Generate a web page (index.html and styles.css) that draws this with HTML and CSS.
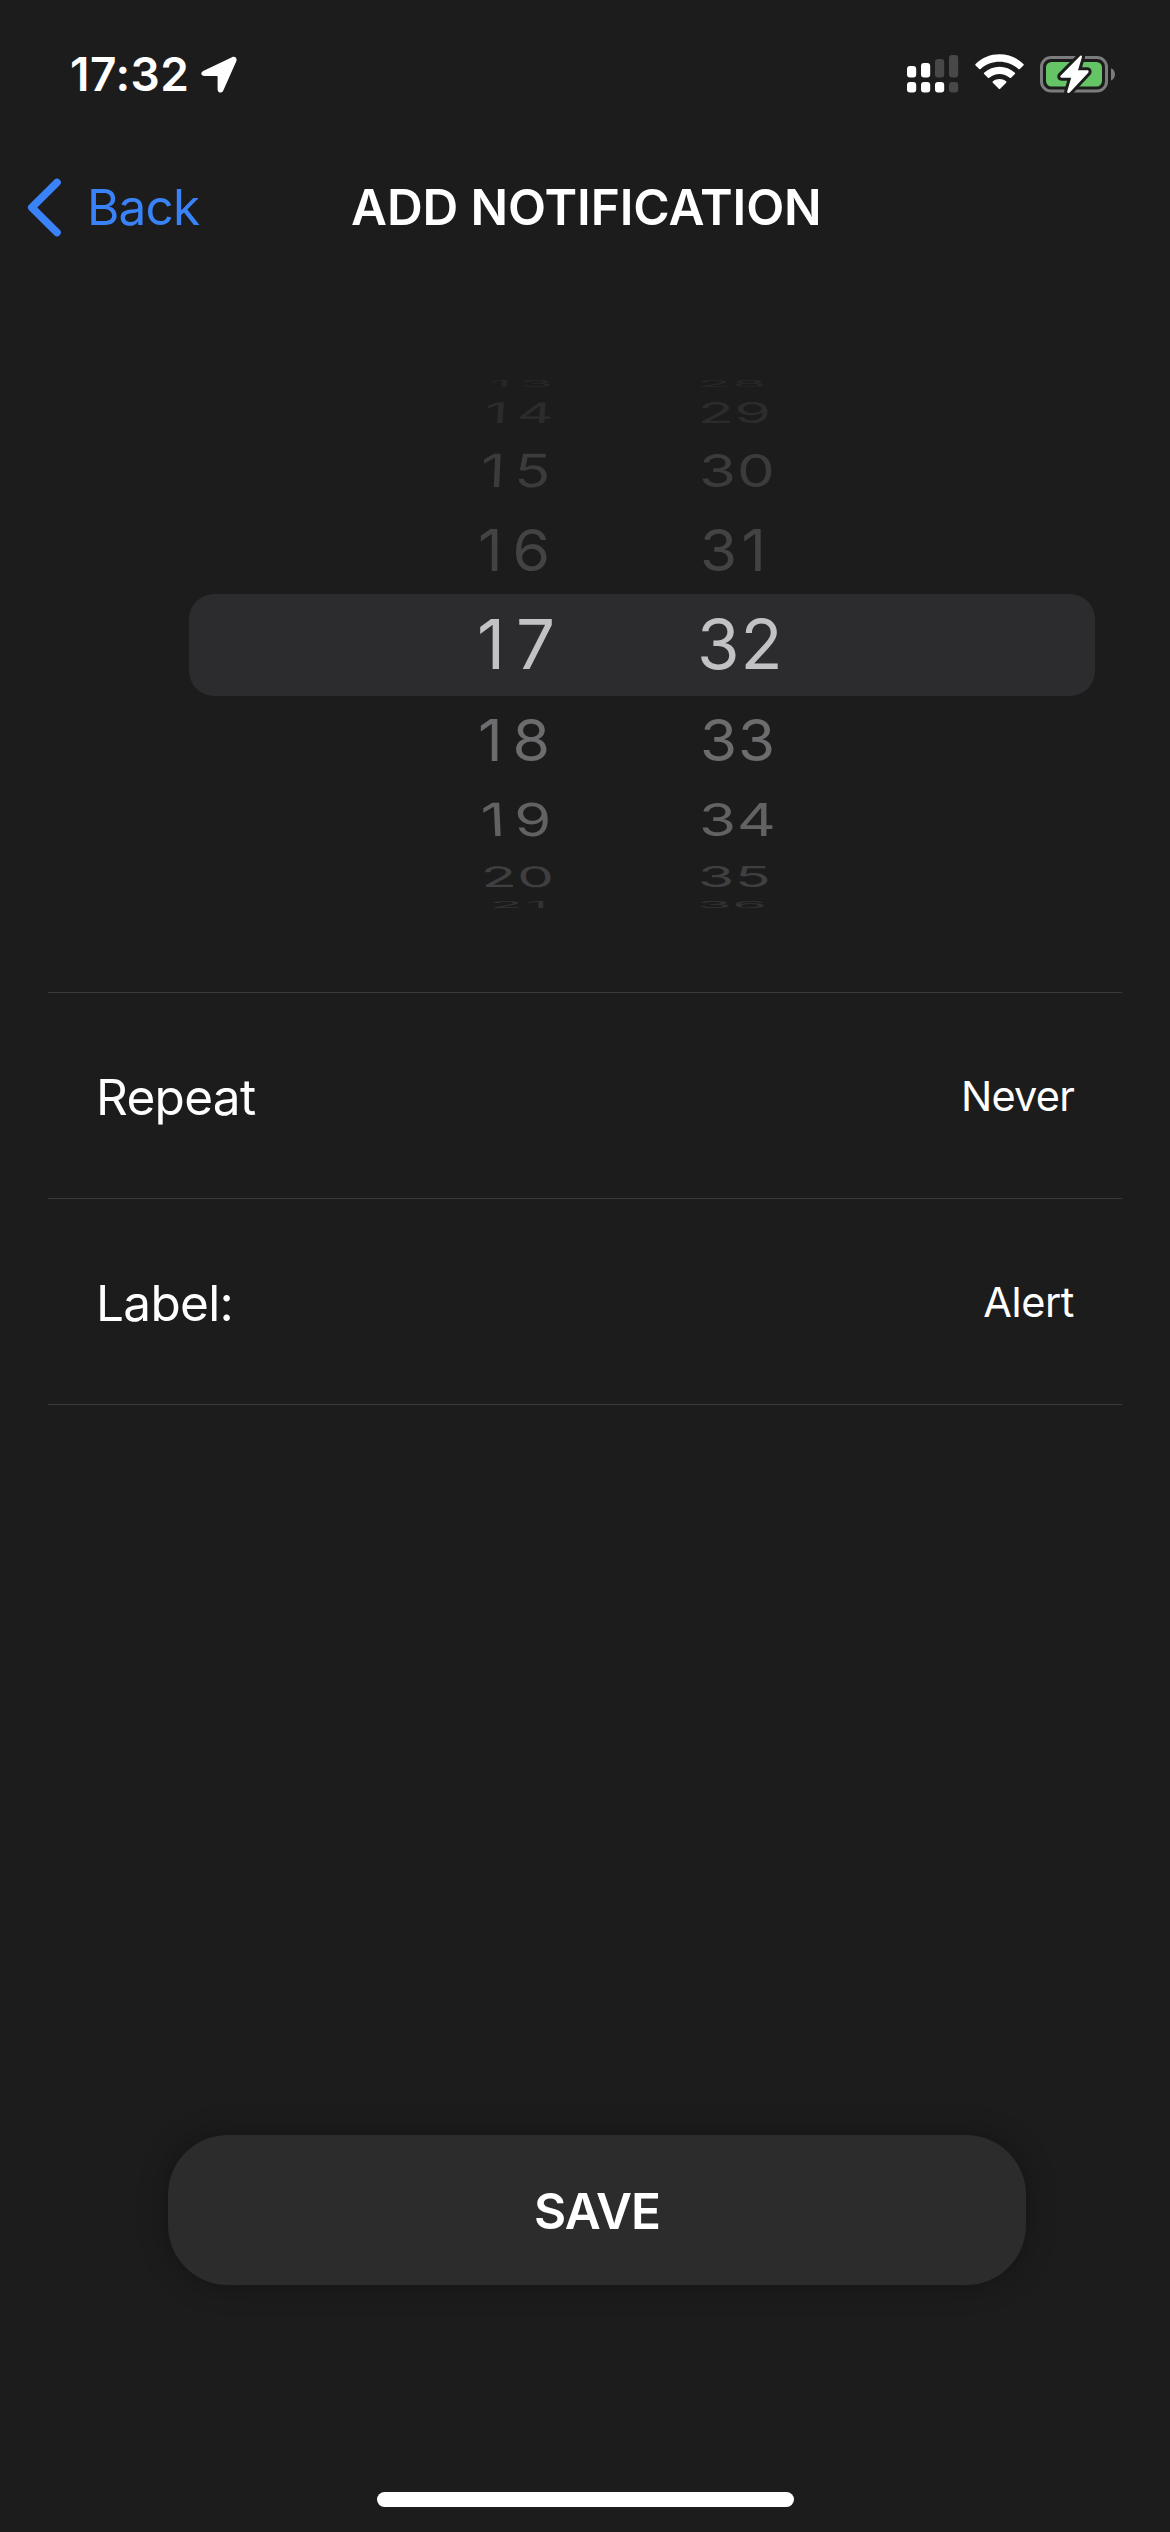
FILE: index.html
```html
<!DOCTYPE html>
<html lang="en">
<head>
<meta charset="utf-8">
<title>Add notification</title>
<link rel="stylesheet" href="styles.css">
</head>
<body>
<header class="status">
  <div class="status-left">
    <span class="time">17:32</span>
    <svg class="location" width="36" height="37" viewBox="0 0 36 37"><path d="M3.2 14.4 31 1.2c2.900-1.300 5.500 1.100 4.300 4.100L22.300 34.500c-1.400 3.200-5.600 2.600-5.700-1V20.800c0-.5-.2-.7-.7-.7H3.700c-4 0-4.900-4-.5-5.700z" fill="#fff"/></svg>
  </div>
  <div class="status-right">
    <svg width="52" height="38" viewBox="0 0 52 38">
      <g fill="#fff">
        <rect x="0" y="11" width="9.200" height="11.500" rx="3"/><rect x="14" y="8" width="9.200" height="14.500" rx="3"/>
        <rect x="0" y="27" width="9.200" height="10.500" rx="3"/><rect x="14" y="27" width="9.200" height="10.500" rx="3"/><rect x="28" y="27" width="9.200" height="10.500" rx="3"/>
      </g>
      <g fill="#48484a">
        <rect x="28" y="4" width="9.200" height="18.500" rx="3"/><rect x="42" y="0" width="9.200" height="22.500" rx="3"/><rect x="42" y="27" width="9.200" height="10.500" rx="3"/>
      </g>
    </svg>
    <svg class="wifi" width="49" height="37" viewBox="0 0 49 37" fill="#fff">
      <path d="M.6 10C13.500-3 35.500-3 48.400 10q.7.700 0 1.400l-3.600 3.600q-.7.700-1.400 0C33 5.300 16 5.300 5.600 15q-.7.700-1.400 0L.6 11.400Q-.1 10.700.6 10z"/>
      <path d="M9.100 18.700c8.500-8 22.300-8 30.800 0q.7.700 0 1.400l-3.800 3.700q-.7.600-1.400 0c-5.700-5.100-14.700-5.100-20.400 0q-.7.600-1.400 0l-3.800-3.700q-.7-.7 0-1.400z"/>
      <path d="M17.900 27.300c3.900-3 9.300-3 13.200 0q.8.700.1 1.400l-6 6.100q-.7.700-1.400 0l-6-6.100q-.7-.7.100-1.400z"/>
    </svg>
    <svg class="battery" width="76" height="39" viewBox="0 0 76 39">
      <rect x="1.500" y="2.500" width="65" height="33.500" rx="9.500" fill="none" stroke="#7c7c7e" stroke-width="3"/>
      <rect x="6" y="7" width="56" height="24.500" rx="5.500" fill="#65c466"/>
      <path d="M71 13.200c5.300 1.800 5.300 10.500 0 12.300z" fill="#7c7c7e"/>
      <path d="M39.800 1.200 20.800 20.400c-1 1-.5 2.300.8 2.300h9.600L27.300 36c-.5 2 1.300 2.500 2.700 1.200L48 18c1.100-1.300.6-2.700-.8-2.700h-9.200L41.800 2.800c.6-2-.6-2.900-2-1.600z" fill="#fff" stroke="#1c1c1c" stroke-width="6" stroke-linejoin="round" paint-order="stroke"/>
    </svg>
  </div>
</header>

<nav class="navbar">
  <a class="back">
    <svg width="35" height="59" viewBox="0 0 35 59"><path d="M30 4.500 4.800 29.500 30 54.500" fill="none" stroke="#3a82f7" stroke-width="7.600" stroke-linecap="round" stroke-linejoin="round"/></svg>
    <span>Back</span>
  </a>
  <h1 class="title">ADD NOTIFICATION</h1>
</nav>

<section class="picker">
  <div class="row far4 up"><span class="hour wide">13</span><span class="minute">28</span></div>
  <div class="row far3 up"><span class="hour wide">14</span><span class="minute">29</span></div>
  <div class="row far2 up"><span class="hour wide">15</span><span class="minute">30</span></div>
  <div class="row far1 up"><span class="hour wide">16</span><span class="minute loose">31</span></div>
  <div class="row selected"><span class="hour wide">17</span><span class="minute">32</span></div>
  <div class="row far1 down"><span class="hour wide">18</span><span class="minute">33</span></div>
  <div class="row far2 down"><span class="hour wide">19</span><span class="minute">34</span></div>
  <div class="row far3 down"><span class="hour">20</span><span class="minute">35</span></div>
  <div class="row far4 down"><span class="hour loose">21</span><span class="minute">36</span></div>
</section>

<section class="settings">
  <div class="setting"><span class="name">Repeat</span><span class="value never">Never</span></div>
  <div class="setting"><span class="name">Label:</span><span class="value">Alert</span></div>
</section>

<button class="save">SAVE</button>
<div class="home-bar"></div>
</body>
</html>
```
FILE: styles.css
```css
* { box-sizing: border-box; }
body {
  margin: 0;
  width: 1170px;
  height: 2532px;
  background: #1c1c1c;
  color: #fff;
  font-family: Inter, "Liberation Sans", sans-serif;
  display: flex;
  flex-direction: column;
  overflow: hidden;
}
.status {
  height: 150px;
  display: flex;
  justify-content: space-between;
  align-items: center;
  padding: 0 54px 2px 70px;
}
.status-left, .status-right { display: flex; align-items: center; }
.time { width: 131px; font-size: 46px; line-height: 56px; font-weight: 600; letter-spacing: 0.5px; }
.wifi { margin-left: 16px; margin-top: -3px; }
.battery { margin-left: 16px; }
.navbar {
  height: 114px;
  display: grid;
  grid-template-columns: 351px 1fr;
  align-items: center;
  font-size: 49.500px;
  line-height: 60px;
}
.back { display: flex; align-items: center; gap: 25px; padding-left: 27px; color: #3a82f7; letter-spacing: -0.8px; }
.title { margin: 0; font-size: 49.500px; font-weight: 600; letter-spacing: -0.1px; white-space: nowrap; }

.picker { margin-top: 113px; height: 533px; flex: none; font-size: 69px; letter-spacing: 1px; }
.row {
  display: grid;
  grid-template-columns: 288px 220px 1fr;
  grid-template-rows: 100%;
  grid-template-areas: ". hour minute";
  margin: 0 75px 0 189px;
  align-items: center;
  line-height: 70px;
}
.hour { grid-area: hour; justify-self: start; transform-origin: 0 50%; transform: translateY(-1px); }
.minute { grid-area: minute; justify-self: start; transform-origin: 0 50%; transform: translateY(-1px); }
.wide { letter-spacing: 11px; }
.loose { letter-spacing: 5px; }
.selected { height: 102px; border-radius: 25px; background: #2c2c2e; color: #c2c2c4; }
.far1 { height: 88px; color: #6c6c6e; }
.far2 { height: 72px; color: #626264; }
.far3 { height: 43px; color: #3f3f41; }
.far4 { height: 14px; color: #323233; }
.far1.up { color: #434344; }
.far1.down { height: 87px; }
.far2.up { color: #3b3b3c; }
.far3.up { color: #2c2c2d; }
.far4.up { color: #272728; }
.far1 .hour { transform: translate(1px, 0) scale(.88, .84); }
.far1 .minute { transform: translate(3px, 0) scale(.87, .84); }
.far2 .hour { transform: translate(4px, 0) scale(.86, .66) skewX(-2deg); }
.far2 .minute { transform: translate(2px, 0) scale(.87, .66); }
.far3 .hour { transform: translate(8px, 0) scale(.82, .41) skewX(-2deg); }
.far3 .minute { transform: translate(1px, 0) scale(.85, .41); }
.far2.down .hour { transform: translate(4px, 0) scale(.86, .66) skewX(2deg); }
.far3.down .hour { transform: translate(4px, 0) scale(.84, .41) skewX(2deg); }
.far4 .hour { transform: translate(13px, 0) scale(.77, .12); }
.far4 .minute { transform: translate(0, 0) scale(.81, .12); }

.settings { margin: 82px 48px 0; border-top: 1px solid #3a3a3b; }
.setting {
  height: 206px;
  padding: 0 48px;
  border-bottom: 1px solid #3a3a3b;
  display: flex;
  justify-content: space-between;
  align-items: center;
}
.name { padding-top: 2px; font-size: 49.500px; letter-spacing: -0.7px; }
.value { padding-top: 1px; font-size: 41.500px; letter-spacing: -0.4px; }
.never { letter-spacing: -0.8px; }
.save {
  margin: 730px 0 0 168px;
  width: 858px;
  height: 150px;
  padding: 2px 0 0;
  border: 0;
  border-radius: 60px;
  background: #2c2c2c;
  box-shadow: 0 0 30px rgba(0, 0, 0, .3);
  color: #fff;
  font: 600 49.500px/60px Inter, "Liberation Sans", sans-serif;
  letter-spacing: -1px;
}
.home-bar { margin: 207px auto 0; width: 417px; height: 15px; border-radius: 8px; background: #fff; }
```
